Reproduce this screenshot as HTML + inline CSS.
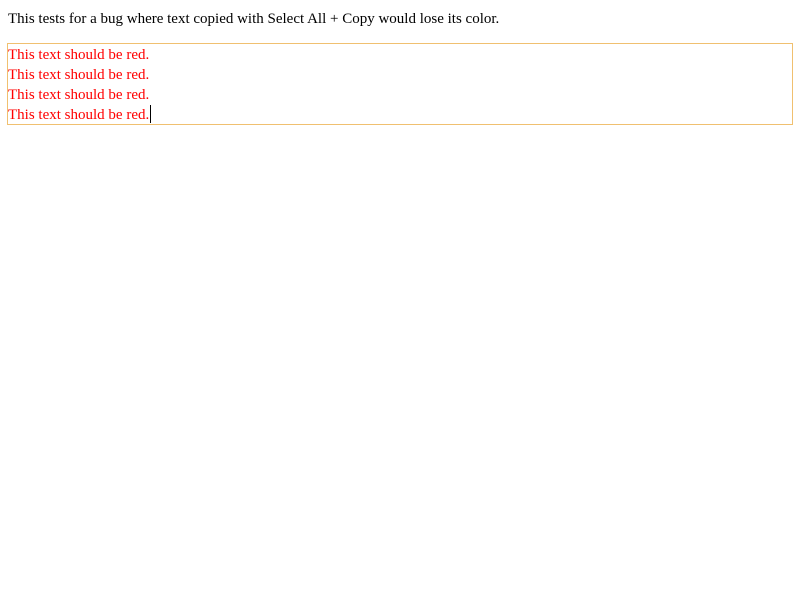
<!DOCTYPE html>
<html><head><style>
body{margin:0;font-family:"Liberation Serif",serif;font-size:15px;background:#fff;}
.t{position:absolute;left:8px;top:10px;line-height:18px;}
.b{position:absolute;left:7px;top:43px;width:784px;height:80px;border:1px solid #f0c070;}
.b div{color:red;line-height:20px;height:20px;position:relative;top:1px;}
.c{display:inline-block;width:1px;height:18px;background:#000;vertical-align:-4px;margin-left:1px;}
</style></head><body>
<div class="t">This tests for a bug where text copied with Select All + Copy would lose its color.</div>
<div class="b">
<div>This text should be red.</div>
<div>This text should be red.</div>
<div>This text should be red.</div>
<div>This text should be red.<span class="c"></span></div>
</div>
</body></html>
